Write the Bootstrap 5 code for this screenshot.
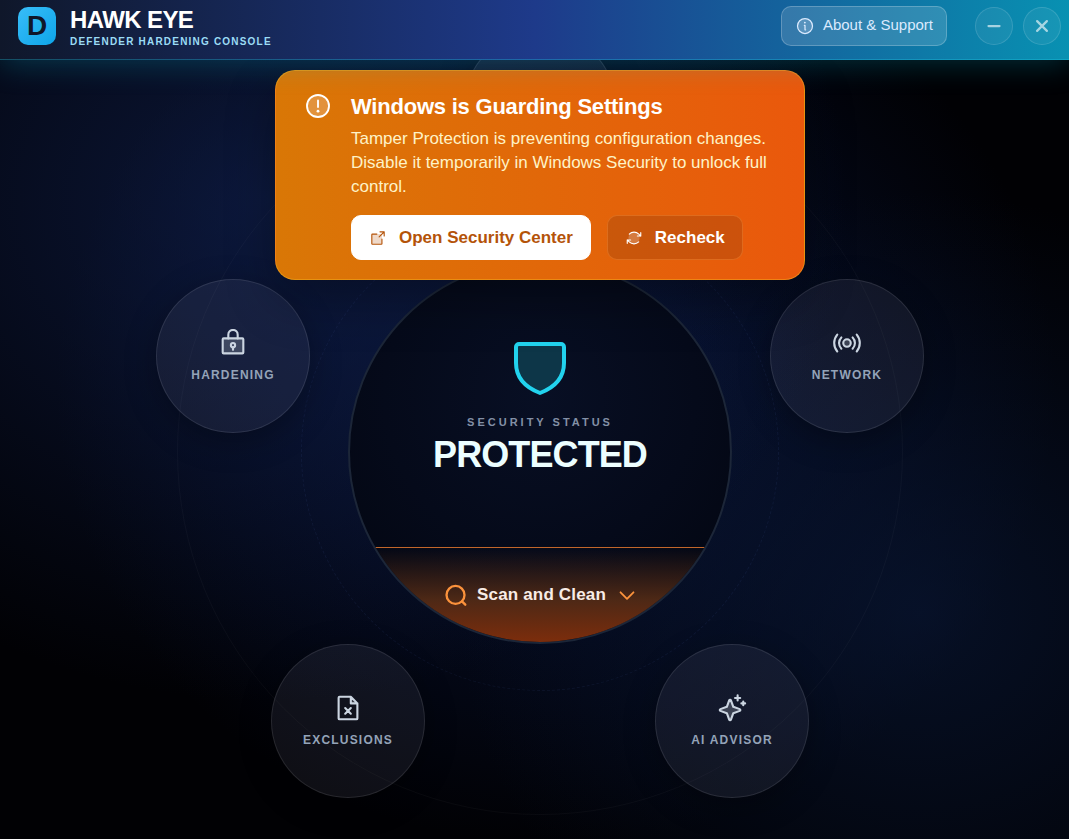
<!DOCTYPE html>
<html lang="en" data-bs-theme="dark">
<head>
<meta charset="utf-8">
<meta name="viewport" content="width=device-width, initial-scale=1">
<title>Hawk Eye</title>
<link href="https://cdn.jsdelivr.net/npm/bootstrap@5.3.0/dist/css/bootstrap.min.css" rel="stylesheet">
<style>
body{font-family:"Liberation Sans",Arial,sans-serif;color:#fff;background:
 radial-gradient(ellipse 580px 500px at 25% 24%,rgba(18,36,88,.6),transparent),
 radial-gradient(ellipse 460px 420px at 86% 73%,rgba(10,26,60,.6),transparent),
 radial-gradient(ellipse 500px 460px at 52% 46%,rgba(11,28,78,.65),transparent),
 #010104}
svg{fill:none;stroke:currentColor;stroke-width:16;stroke-linecap:round;stroke-linejoin:round;display:block;flex:none}
svg .tint{fill:currentColor;fill-opacity:.22;stroke:none}
.dot{fill:currentColor;stroke:none}
.topbar{height:60px;padding:0 8px 8px 18px;background:linear-gradient(90deg,#0f172a,#1e3a8a 50%,#0891b2);border-bottom:1px solid rgba(34,211,238,.3);box-shadow:0 4px 30px rgba(6,182,212,.26);z-index:5}
.logo{width:38px;height:38px;border-radius:10px;background:linear-gradient(135deg,#38bdf8,#0ea5e9);color:#0f172a;font-size:28px;font-weight:700;line-height:38px}
.brand{margin-left:14px;padding-top:4px}
.app-name{font-size:24px;line-height:24px;font-weight:700;letter-spacing:-.025em}
.tagline{font-size:10px;line-height:12px;font-weight:700;letter-spacing:.12em;color:#9bdcf5}
.about{height:40px;padding:0 13px;border-radius:10px;font-size:15px;color:#dbeafe;background:rgba(255,255,255,.14);border:1px solid rgba(255,255,255,.22)}
.winbtn{width:38px;height:38px;padding:0;border-radius:50%;color:rgba(255,255,255,.62);background:rgba(255,255,255,.06);border:1px solid rgba(255,255,255,.13)}
.winbtn svg{stroke-width:36}
.winset{gap:10px}
main{display:grid;padding:5px 0 0 11px;overflow:hidden}
main>*{grid-area:1/1}
.notice{width:530px;max-width:100%;margin-top:5px;padding:20px 28px 19px;justify-self:center;align-self:start;border-radius:20px;background:linear-gradient(90deg,#d97706,#ea580c);border:1px solid rgba(251,191,36,.4);box-shadow:0 20px 50px rgba(0,0,0,.3);z-index:3}
.notice-icon{margin-left:-1px}
.notice-text{margin-left:18px}
.notice h1{font-size:22px;line-height:32px;font-weight:700;letter-spacing:-.01em;margin:0}
.notice p{font-size:17px;line-height:24px;color:#fef3c7;margin:4px 0 16px}
.act{height:45px;padding:0 17px;gap:12px;border-radius:10px;font-size:17px;line-height:20px;font-weight:700}
.act-main,.act-main:hover{background:#fff;color:#b45309;border:1px solid #fff}
.act-alt,.act-alt:hover{background:rgba(120,53,15,.25);color:#fff;border:1px solid rgba(251,146,60,.4)}
.stage{width:726px;height:726px;place-self:center;border-radius:50%;border:1px solid rgba(255,255,255,.03)}
.ring{width:478px;height:478px;border-radius:50%;border:1px dashed rgba(120,150,255,.07)}
.core{width:384px;height:384px;border-radius:50%;border:2px solid #1c2638;overflow:hidden;background:radial-gradient(circle at 50% 35%,#080f24,#050a1a 50%,#02050e)}
.core-main{border-bottom:1px solid #c2662a}
.status{margin-top:12px;font-size:11px;line-height:16px;font-weight:700;letter-spacing:3px;color:#8390a6}
.state{margin-top:5px;font-size:36px;line-height:40px;font-weight:700;letter-spacing:-.025em;color:#ecfeff}
.scan,.scan:hover{height:94px;border:0;border-radius:0;color:#f8ece6;font-size:17px;font-weight:700;letter-spacing:.01em;background:linear-gradient(rgba(124,45,18,0),rgba(90,46,22,.85) 55%,#7c2d0c)}
.node,.node:hover{position:absolute;width:154px;height:154px;transform:translate(-50%,-50%);padding:0;border-radius:50%;color:#cbd5e1;background:rgba(148,152,180,.1);border:1px solid rgba(255,255,255,.1);box-shadow:0 8px 32px rgba(0,0,0,.3)}
.node svg{stroke-width:18}
.node span{font-size:12px;line-height:16px;font-weight:700;letter-spacing:.1em;color:#94a3b8}
.n-top{left:50%;top:calc(50% - 344px)}
.n-hard{left:calc(50% - 307px);top:calc(50% - 96px)}
.n-net{left:calc(50% + 307px);top:calc(50% - 96px)}
.n-excl{left:calc(50% - 192px);top:calc(50% + 269px)}
.n-ai{left:calc(50% + 192px);top:calc(50% + 269px)}
.shield{stroke-width:4;color:#22d3ee}
.lens{stroke-width:24;color:#fb923c}
.chevron{stroke-width:26;color:#fb923c}
</style>
</head>
<body class="min-vh-100 d-flex flex-column">
<header class="topbar d-flex align-items-center position-relative">
  <div class="logo text-center">D</div>
  <div class="brand">
    <div class="app-name">HAWK EYE</div>
    <div class="tagline mt-1">DEFENDER HARDENING CONSOLE</div>
  </div>
  <button type="button" class="btn about d-flex align-items-center gap-2 ms-auto me-4">
    <svg width="20" height="20" viewBox="0 0 256 256"><circle class="tint" cx="128" cy="128" r="96"/><circle cx="128" cy="128" r="96"/><path d="M120 120h8v56h8"/><circle class="dot" cx="126" cy="84" r="12"/></svg>
    <span>About &amp; Support</span>
  </button>
  <div class="d-flex ms-1 winset">
    <button type="button" class="btn winbtn d-flex align-items-center justify-content-center" aria-label="Minimize"><svg width="16" height="16" viewBox="0 0 256 256"><path d="M40 128h176"/></svg></button>
    <button type="button" class="btn winbtn d-flex align-items-center justify-content-center" aria-label="Close"><svg width="16" height="16" viewBox="0 0 256 256"><path d="M50 50l156 156M206 50L50 206"/></svg></button>
  </div>
</header>

<main class="flex-grow-1">
  <div class="stage position-relative d-flex align-items-center justify-content-center">
    <div class="ring d-flex align-items-center justify-content-center flex-shrink-0">
      <section class="core d-flex flex-column flex-shrink-0">
        <div class="core-main flex-grow-1 d-flex flex-column align-items-center text-center pt-5">
          <svg class="shield mt-4" width="68" height="68" viewBox="0 0 68 68"><path fill="#0d3648" d="M13 10h42a3 3 0 0 1 3 3v16c0 16-11 25-24 30C21 54 10 45 10 29V13a3 3 0 0 1 3-3z"/></svg>
          <div class="status">SECURITY STATUS</div>
          <div class="state">PROTECTED</div>
        </div>
        <button type="button" class="btn scan d-flex align-items-center justify-content-center w-100 gap-2">
          <svg class="lens" width="25" height="25" viewBox="0 0 256 256"><circle cx="118" cy="122" r="92"/><path d="M184 188l34 34"/></svg>
          <span class="me-1">Scan and Clean</span>
          <svg class="chevron" width="18" height="18" viewBox="0 0 256 256"><path d="M36 90l92 92 92-92"/></svg>
        </button>
      </section>
    </div>
    <button type="button" class="btn node n-top" aria-label="Overview"></button>
    <button type="button" class="btn node n-hard d-flex flex-column align-items-center justify-content-center gap-2">
      <svg width="30" height="30" viewBox="0 0 256 256"><rect class="tint" x="40" y="80" width="176" height="128" rx="8"/><rect x="40" y="80" width="176" height="128" rx="8"/><path d="M88 80V48a40 40 0 0 1 80 0v32M128 156v22"/><circle cx="128" cy="138" r="18"/></svg>
      <span>HARDENING</span>
    </button>
    <button type="button" class="btn node n-net d-flex flex-column align-items-center justify-content-center gap-2">
      <svg width="30" height="30" viewBox="0 0 256 256"><circle class="tint" cx="128" cy="120" r="32"/><circle cx="128" cy="120" r="32"/><path d="M80 168a68 68 0 0 1 0-96M176 72a68 68 0 0 1 0 96M45 192a112 112 0 0 1 0-144M211 48a112 112 0 0 1 0 144"/></svg>
      <span>NETWORK</span>
    </button>
    <button type="button" class="btn node n-excl d-flex flex-column align-items-center justify-content-center gap-2">
      <svg width="30" height="30" viewBox="0 0 256 256"><path class="tint" d="M152 24v56h56z"/><path d="M200 216H56a8 8 0 0 1-8-8V32a8 8 0 0 1 8-8h96l56 56v128a8 8 0 0 1-8 8zM152 24v56h56M104 120l48 48M152 120l-48 48"/></svg>
      <span>EXCLUSIONS</span>
    </button>
    <button type="button" class="btn node n-ai d-flex flex-column align-items-center justify-content-center gap-2">
      <svg width="30" height="30" viewBox="0 0 256 256"><path fill="currentColor" fill-opacity=".22" d="M84 164l-55-20a8 8 0 0 1 0-15l55-20 20-55a8 8 0 0 1 15 0l20 55 55 20a8 8 0 0 1 0 15l-55 20-20 55a8 8 0 0 1-15 0z"/><path d="M176 12v44M154 34h44M224 64v32M208 80h32"/></svg>
      <span>AI ADVISOR</span>
    </button>
  </div>

  <div class="notice d-flex align-items-start" role="alert">
    <svg class="notice-icon" width="30" height="30" viewBox="0 0 256 256"><circle class="tint" cx="128" cy="128" r="94"/><circle cx="128" cy="128" r="94"/><path d="M128 80v56"/><circle class="dot" cx="128" cy="172" r="12"/></svg>
    <div class="notice-text">
      <h1>Windows is Guarding Settings</h1>
      <p>Tamper Protection is preventing configuration changes. Disable it temporarily in Windows Security to unlock full control.</p>
      <div class="d-flex flex-wrap gap-3">
        <button type="button" class="btn act act-main d-flex align-items-center">
          <svg width="18" height="18" viewBox="0 0 256 256"><path class="tint" d="M184 216H40V72h144z"/><path d="M216 100V40h-60M144 112l72-72M184 144v64a8 8 0 0 1-8 8H48a8 8 0 0 1-8-8V80a8 8 0 0 1 8-8h64"/></svg>
          <span>Open Security Center</span>
        </button>
        <button type="button" class="btn act act-alt d-flex align-items-center">
          <svg width="18" height="18" viewBox="0 0 256 256"><circle class="tint" cx="128" cy="128" r="80"/><path d="M176 100h48V52M224 100l-28-28a96 96 0 0 0-135 0M80 156H32v48M32 156l28 28a96 96 0 0 0 135 0"/></svg>
          <span>Recheck</span>
        </button>
      </div>
    </div>
  </div>
</main>
<script src="https://cdn.jsdelivr.net/npm/bootstrap@5.3.0/dist/js/bootstrap.bundle.min.js"></script>
</body>
</html>
